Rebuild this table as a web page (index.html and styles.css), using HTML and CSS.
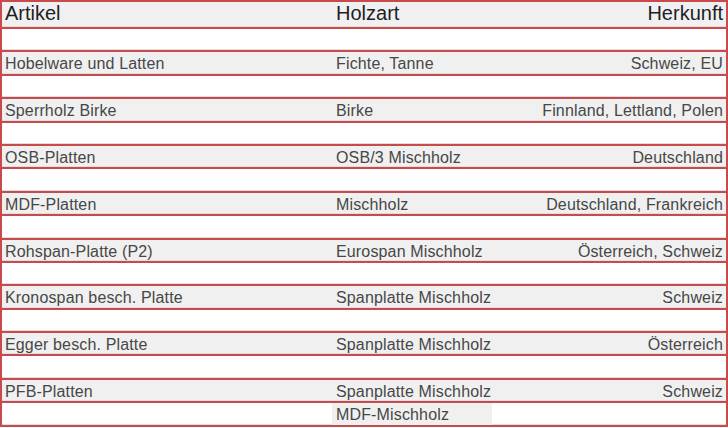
FILE: index.html
```html
<!DOCTYPE html>
<html lang="de">
<head>
<meta charset="utf-8">
<title>Holzarten</title>
<link rel="stylesheet" href="styles.css">
</head>
<body>
<div class="table">
  <div class="row head">
    <div class="cell c1">Artikel</div>
    <div class="cell c2">Holzart</div>
    <div class="cell c3">Herkunft</div>
  </div>
  <div class="row blank"></div>
  <div class="row grey">
    <div class="cell c1">Hobelware und Latten</div>
    <div class="cell c2">Fichte, Tanne</div>
    <div class="cell c3">Schweiz, EU</div>
  </div>
  <div class="row blank"></div>
  <div class="row grey">
    <div class="cell c1">Sperrholz Birke</div>
    <div class="cell c2">Birke</div>
    <div class="cell c3">Finnland, Lettland, Polen</div>
  </div>
  <div class="row blank"></div>
  <div class="row grey">
    <div class="cell c1">OSB-Platten</div>
    <div class="cell c2">OSB/3 Mischholz</div>
    <div class="cell c3">Deutschland</div>
  </div>
  <div class="row blank"></div>
  <div class="row grey">
    <div class="cell c1">MDF-Platten</div>
    <div class="cell c2">Mischholz</div>
    <div class="cell c3">Deutschland, Frankreich</div>
  </div>
  <div class="row blank"></div>
  <div class="row grey">
    <div class="cell c1">Rohspan-Platte (P2)</div>
    <div class="cell c2">Eurospan Mischholz</div>
    <div class="cell c3">Österreich, Schweiz</div>
  </div>
  <div class="row blank"></div>
  <div class="row grey">
    <div class="cell c1">Kronospan besch. Platte</div>
    <div class="cell c2">Spanplatte Mischholz</div>
    <div class="cell c3">Schweiz</div>
  </div>
  <div class="row blank"></div>
  <div class="row grey">
    <div class="cell c1">Egger besch. Platte</div>
    <div class="cell c2">Spanplatte Mischholz</div>
    <div class="cell c3">Österreich</div>
  </div>
  <div class="row blank"></div>
  <div class="row grey">
    <div class="cell c1">PFB-Platten</div>
    <div class="cell c2">Spanplatte Mischholz</div>
    <div class="cell c3">Schweiz</div>
  </div>
  <div class="row last">
    <div class="cell c1"></div>
    <div class="cell c2 shade">MDF-Mischholz</div>
    <div class="cell c3"></div>
  </div>
</div>
</body>
</html>
```

FILE: styles.css
```css
html, body {
  margin: 0;
  padding: 0;
  background: #ffffff;
}

body {
  font-family: "Liberation Sans", Arial, sans-serif;
  color: #474747;
  overflow: hidden;
}

.table {
  width: 728px;
}

.row {
  display: grid;
  grid-template-columns: 330px 160px 1fr;
  height: 21.4px;
  border-left: 2px solid #c94a4c;
  border-right: 2px solid #c94a4c;
  border-bottom: 2px solid #c94a4c;
  box-shadow: inset 0 -1px 0 #dedede;
  font-size: 16px;
  line-height: 23px;
  letter-spacing: 0.15px;
}

.row.head {
  height: 25px;
  border-top: 2px solid #c94a4c;
  background: #f0f0f0;
  font-size: 20px;
  line-height: 23px;
  letter-spacing: 0;
  color: #1e1e28;
}

.row.grey {
  background: #f0f0f0;
}

.cell {
  white-space: nowrap;
  overflow: hidden;
}

.c1 {
  padding-left: 3px;
}

.c2 {
  padding-left: 4px;
}

.c3 {
  text-align: right;
  padding-right: 3px;
}

.shade {
  background: #f0f0f0;
}
```
